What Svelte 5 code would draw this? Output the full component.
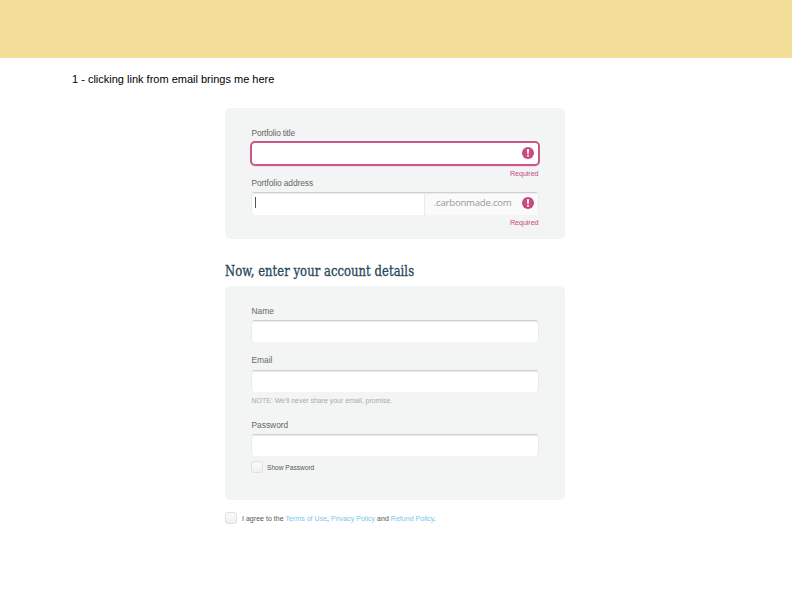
<script>
  const links = ['Terms of Use', 'Privacy Policy', 'Refund Policy'];
</script>

{#snippet alertIcon()}
  <svg class="alert" viewBox="0 0 12 12" aria-hidden="true">
    <circle cx="6" cy="6" r="6" fill="#c74b82" />
    <path d="M4.9 2.2h2.2l-.4 4.8h-1.4z" fill="#fff" />
    <circle cx="6" cy="8.8" r="1" fill="#fff" />
  </svg>
{/snippet}

<div class="page">
  <header></header>
  <p class="caption">1 - clicking link from email brings me here</p>
  <main>
    <section class="panel first">
      <div class="label title">Portfolio title</div>
      <div class="field error">{@render alertIcon()}</div>
      <div class="required">Required</div>
      <div class="label address">Portfolio address</div>
      <div class="field split">
        <span class="entry"><i class="caret"></i></span>
        <span class="suffix"><span class="domain">.carbonmade.com</span>{@render alertIcon()}</span>
      </div>
      <div class="required second">Required</div>
    </section>

    <h2><span>Now, enter your account details</span></h2>

    <section class="panel account">
      <div class="label name">Name</div>
      <div class="field"></div>
      <div class="label email">Email</div>
      <div class="field"></div>
      <div class="note">NOTE: We'll never share your email, promise.</div>
      <div class="label password">Password</div>
      <div class="field"></div>
      <div class="check show"><i class="box"></i><span>Show Password</span></div>
    </section>

    <div class="check agree">
      <i class="box"></i>
      <span>I agree to the <a>{links[0]}</a>, <a>{links[1]}</a> and <a>{links[2]}</a>.</span>
    </div>
  </main>
</div>

<style>
  :global(body) { margin: 0; background: #fff; }
  .page { width: 792px; height: 612px; overflow: hidden; background: #fff; font-family: "Liberation Sans", Arial, sans-serif; color: #666; }
  header { height: 58px; background: #f3de99; }
  .caption { margin: 14px 0 0 72px; height: 14px; line-height: 14px; font-size: 11px; color: #000; white-space: nowrap; }
  main { width: 340px; margin: 22px 0 0 225px; }
  .panel { box-sizing: border-box; width: 340px; background: #f3f5f5; border-radius: 5px; padding: 0 26px; overflow: hidden; }
  .first { height: 131px; }
  .account { height: 214px; margin-top: 5px; }
  .label { height: 10px; line-height: 10px; font-size: 8.4px; white-space: nowrap; padding-left: .5px; }
  .title { margin-top: 20px; letter-spacing: -.18px; }
  .address { margin-top: -1px; letter-spacing: -.08px; }
  .field { box-sizing: border-box; height: 22px; width: 288px; background: #fff; border: 1px solid #eaecec; border-top-color: #cdd0d0; border-bottom: 0; border-radius: 4px; box-shadow: inset 0 1px 0 #ececec; }
  .error { width: 290px; height: 25px; margin: 3px 0 0 -1px; border: 2px solid #c6598a; border-radius: 5px; display: flex; align-items: center; justify-content: flex-end; padding: 0 4px 1px 0; box-shadow: 0 1px 0 #fbd6e8; }
  .alert { width: 12px; height: 12px; flex: none; display: block; }
  .required { height: 10px; line-height: 10px; font-size: 7.2px; letter-spacing: -.08px; color: #c74b82; text-align: right; margin-top: 3px; padding-right: .5px; }
  .split { display: flex; height: 23px; margin-top: 4px; overflow: hidden; }
  .entry { width: 172px; padding-top: 4px; padding-left: 3px; box-sizing: border-box; }
  .caret { display: block; width: 1px; height: 11px; background: #555; }
  .suffix { flex: 1; display: flex; align-items: center; background: #fafafa; border-left: 1px solid #e8eaea; padding: 0 4px 2px 0; justify-content: flex-end; box-shadow: inset 0 1px 0 #ececec; }
  .domain { font-family: "Open Sans", "Noto Sans", sans-serif; font-size: 9.6px; letter-spacing: -.23px; line-height: 20px; color: #999; margin-right: 10.5px; white-space: nowrap; }
  h2 { margin: 22px 0 0; height: 20px; line-height: 20px; font-family: "DejaVu Serif Condensed", "DejaVu Serif", serif; font-stretch: condensed; font-weight: 400; font-size: 14px; letter-spacing: .06px; color: #27485c; white-space: nowrap; }
  h2 span { display: inline-block; transform: scaleX(.92); transform-origin: 0 50%; -webkit-text-stroke: .3px #27485c; }
  .name { margin: 20px 0 4px; }
  .email { margin: 13px 0 5px; }
  .note { margin-top: 4px; height: 10px; line-height: 10px; font-size: 7px; letter-spacing: -.03px; padding-left: .5px; color: #aaa; white-space: nowrap; }
  .password { margin: 14px 0 4px; }
  .check { display: flex; align-items: center; height: 12px; font-size: 7px; white-space: nowrap; color: #555; }
  .box { box-sizing: border-box; width: 12px; height: 12px; border: 1px solid #dfe1e1; border-radius: 3px; background: linear-gradient(#fafafa, #f0f0f0); }
  .show { margin-top: 5px; font-size: 6.6px; }
  .show span { margin-left: 4px; }
  .agree { margin-top: 12px; padding-left: .4px; letter-spacing: .03px; }
  .agree span { margin-left: 4.6px; }
  a { color: #7cc5ea; }
</style>
